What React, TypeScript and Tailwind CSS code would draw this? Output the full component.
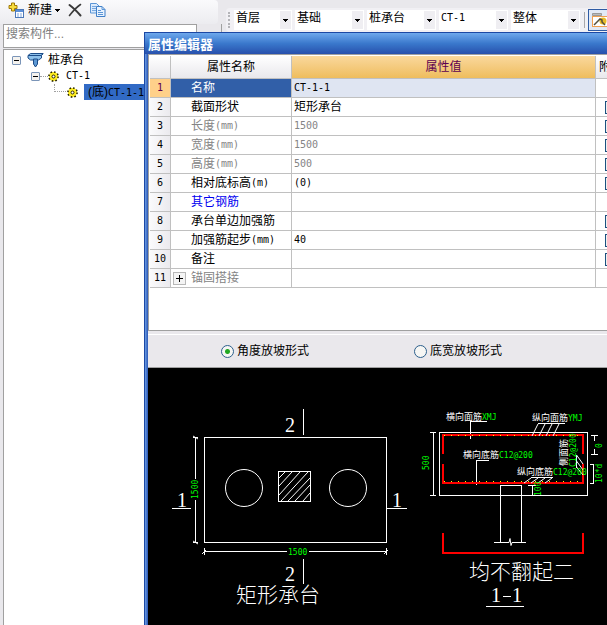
import { useState } from "react";
import clsx from "clsx";

type Row = {
  name: string;
  unit?: string;
  value?: string;
  tone?: "muted" | "link";
  extra?: boolean;
  expand?: boolean;
};

const rows: Row[] = [
  { name: "名称", value: "CT-1-1" },
  { name: "截面形状", value: "矩形承台", extra: true },
  { name: "长度", unit: "(mm)", value: "1500", tone: "muted", extra: true },
  { name: "宽度", unit: "(mm)", value: "1500", tone: "muted", extra: true },
  { name: "高度", unit: "(mm)", value: "500", tone: "muted", extra: true },
  { name: "相对底标高", unit: "(m)", value: "(0)", extra: true },
  { name: "其它钢筋", tone: "link" },
  { name: "承台单边加强筋", extra: true },
  { name: "加强筋起步", unit: "(mm)", value: "40", extra: true },
  { name: "备注", extra: true },
  { name: "锚固搭接", tone: "muted", expand: true },
];

const combos = [
  { label: "楼层", value: "首层", width: "w-[58px]" },
  { label: "类别", value: "基础", width: "w-[69px]" },
  { label: "构件类型", value: "桩承台", width: "w-[69px]" },
  { label: "构件", value: "CT-1", width: "w-[69px]" },
  { label: "范围", value: "整体", width: "w-[69px]" },
];

const mono = "font-['DejaVu_Sans_Mono','Noto_Sans_CJK_SC',monospace] text-[10px]";

function Arrow() {
  return (
    <svg width="5" height="3" viewBox="0 0 5 3" shapeRendering="crispEdges">
      <path d="M0 0h5v1h-1v1h-1v1h-1v-1h-1v-1h-1z" />
    </svg>
  );
}

function NewIcon() {
  return (
    <svg width="17" height="16" viewBox="0 0 17 16">
      <path d="M3.500 1h3v2.500h2.500v3h-2.500v2.500h-3v-2.500H1v-3h2.500z" fill="#f8dc3c" stroke="#a07808" />
      <rect x="7.500" y="7.500" width="8" height="8" fill="#fff" stroke="#4c78b8" />
      <path d="M8 8h7v2H8z" fill="#5a8ed8" />
      <path d="M9 12h2M12 12h2M9 14h2M12 14h2" stroke="#7fa6de" />
    </svg>
  );
}

function DeleteIcon() {
  return (
    <svg width="14" height="14" viewBox="0 0 14 14" fill="none" stroke="#3a3a3a" strokeLinecap="round">
      <path d="M1.500 2C5 4.500 9 8.500 12.500 12.500" strokeWidth="2" />
      <path d="M12.500 1.500C8 4.500 5 8 1.500 12.500" strokeWidth="1.600" />
    </svg>
  );
}

function CopyIcon() {
  return (
    <svg width="16" height="14" viewBox="0 0 16 14">
      <path d="M.5.5h6l3 3v6.500h-9z" fill="#dcebfc" stroke="#5b95d6" />
      <path d="M2 3.500h4M2 5.500h4M2 7.500h4" stroke="#78a8e0" />
      <path d="M6.500 3.500h5.500l3 3v7h-8.500z" fill="#e8f2fe" stroke="#3f7fc8" />
      <path d="M12 3.500v3h3M8 7.500h3M8 9.500h5M8 11.500h5" fill="none" stroke="#5b95d6" />
    </svg>
  );
}

function PileIcon() {
  return (
    <svg width="17" height="16" viewBox="0 0 17 16">
      <path d="M1 3.500l2.500-2h12.500l-1.500 2v2.500l-3 2h-8L1 6z" fill="#8cc0ea" stroke="#1c4c88" />
      <path d="M1 3.500h13M14.500 3.500l1.500-2" stroke="#1c4c88" fill="none" />
      <path d="M6.500 7h4v5l-2 3-2-3z" fill="#5c98d4" stroke="#1c4c88" />
    </svg>
  );
}

function GearIcon() {
  return (
    <svg width="11" height="11" viewBox="0 0 11 11">
      <circle cx="5.500" cy="5.500" r="4.500" fill="#ffee20" stroke="#2a2600" strokeWidth="1.800" strokeDasharray="1.600 1.930" />
      <circle cx="5.500" cy="5.500" r="3.800" fill="#ffee20" />
      <circle cx="5.500" cy="5.500" r="1.500" fill="#fff" stroke="#2a2600" />
    </svg>
  );
}

function EditIcon() {
  return (
    <svg width="16" height="14" viewBox="0 0 16 14">
      <path d="M.5.5h9v2h-9z" fill="#bbb" stroke="#999" />
      <rect x=".5" y="3.500" width="15" height="10" fill="#fff" stroke="#f0a050" />
      <circle cx="11" cy="8" r="3.500" fill="#e8bc28" />
      <path d="M2 12l4-4 2-2 2 1v2l3 3" fill="none" stroke="#54503c" strokeWidth="1.500" />
    </svg>
  );
}

function Toggle() {
  return (
    <button
      aria-label="折叠"
      className="flex size-[9px] shrink-0 items-center justify-center rounded-[1px] border border-[#7b95b8] bg-[#f4f2ee]"
    >
      <span className="h-px w-[5px] bg-black" />
    </button>
  );
}

function Toolbar() {
  return (
    <div className="flex items-start">
      <div className="flex h-6 w-[218px] shrink-0 items-start rounded-r bg-gradient-to-b from-[#fafafc] to-[#ececf0] pl-2 pt-0.5">
        <button className="flex items-center gap-[3px] text-xs leading-4">
          <NewIcon />
          新建
          <Arrow />
        </button>
        <button aria-label="删除" className="ml-2 mt-px"><DeleteIcon /></button>
        <button aria-label="复制" className="ml-2 mt-px"><CopyIcon /></button>
      </div>
      <div className="ml-2 mt-2 flex h-6 grow items-center gap-[3px] overflow-hidden rounded-l bg-[#f1f0f4] pl-0.5">
        <div className="mr-px h-4 border-l-2 border-dotted border-[#b4b4b8]" />
        {combos.map((c) => (
          <div key={c.label} className={clsx("relative h-5 shrink-0 bg-white", c.width)}>
            <select
              aria-label={c.label}
              defaultValue={c.value}
              className={clsx(
                "block h-4 w-full appearance-none bg-transparent pl-0.5 leading-4 outline-none",
                c.value === "CT-1" ? mono : "text-xs",
              )}
            >
              <option>{c.value}</option>
            </select>
            <span className="pointer-events-none absolute inset-y-px right-px flex w-[11px] items-center justify-center bg-[#efeef2]">
              <Arrow />
            </span>
          </div>
        ))}
        <div className="ml-px h-4 w-px shrink-0 bg-[#a8a8ac]" />
        <button aria-label="编辑" className="flex h-[22px] w-7 shrink-0 items-center border border-[#2f5ba4] bg-[#e2e9f5] pl-[3px]">
          <EditIcon />
        </button>
      </div>
    </div>
  );
}

function Tree() {
  return (
    <ul className="pt-0.5 text-xs leading-4">
      <li className="flex h-4 items-center pl-2">
        <Toggle />
        <span className="ml-1.5"><PileIcon /></span>
        <span className="ml-1">桩承台</span>
      </li>
      <li className="flex h-4 items-center pl-[27px]">
        <Toggle />
        <span className="w-2 border-t border-dotted border-[#a0a0a0]" />
        <GearIcon />
        <span className={clsx("ml-[7px]", mono)}>CT-1</span>
      </li>
      <li className="flex h-4 items-center pl-[50px]">
        <span className="mb-2 h-2 w-3 border-b border-l border-dotted border-[#a0a0a0]" />
        <span className="ml-px"><GearIcon /></span>
        <span className="ml-1.5 h-4 whitespace-nowrap bg-[#316ac5] px-1">
          (底)<span className={mono}>CT-1-1</span>
        </span>
      </li>
    </ul>
  );
}

function PropertyTable() {
  return (
    <table className="w-full table-fixed border-separate border-spacing-0 text-xs leading-4">
      <colgroup>
        <col className="w-[21px]" />
        <col className="w-[121px]" />
        <col />
        <col className="w-[75px]" />
      </colgroup>
      <thead>
        <tr className="h-[23px] *:border-b *:border-r *:border-[#c0c0c0] *:p-0 *:font-normal">
          <th className="bg-gradient-to-b from-white to-[#e9e8ec]" />
          <th className="bg-gradient-to-b from-white to-[#e9e8ec]">属性名称</th>
          <th className="bg-gradient-to-b from-[#fad89c] to-[#efbd5c] text-[#5c0050]">属性值</th>
          <th className="bg-gradient-to-b from-white to-[#e9e8ec] text-left"><span className="pl-[3px]">附加</span></th>
        </tr>
      </thead>
      <tbody>
        {rows.map((r, i) => (
          <tr
            key={r.name}
            className={clsx(
              "h-[19px] *:border-b *:border-r *:border-[#c0c0c0] *:p-0",
              r.tone === "muted" && "text-[#848484]",
            )}
          >
            <td
              className={clsx(
                "text-center",
                mono,
                i === 0 ? "bg-[#ffd08a] text-[#5c0050]" : "bg-gradient-to-r from-[#fafafc] to-[#ebeaee] text-black",
              )}
            >
              {i + 1}
            </td>
            <td className={clsx(i === 0 && "bg-[#315fa8] text-white", r.tone === "link" && "text-[#0000f0]")}>
              <div className={clsx("flex h-[18px] items-center whitespace-nowrap", r.expand ? "gap-[5px] pl-0.5" : "pl-5")}>
                {r.expand && (
                  <button aria-label="展开" className="flex size-[13px] items-center justify-center border border-[#b8b8b8] bg-[#f4f4f4]">
                    <svg width="7" height="7" viewBox="0 0 7 7" shapeRendering="crispEdges">
                      <path d="M0 3h7v1H0zM3 0h1v7H3z" />
                    </svg>
                  </button>
                )}
                {r.name}
                {r.unit && <span className={mono}>{r.unit}</span>}
              </div>
            </td>
            <td className={clsx(i === 0 && "bg-[#dfe5f2]")}>
              <div className={clsx("pl-0.5", r.value !== "矩形承台" && mono)}>{r.value}</div>
            </td>
            <td>
              {r.extra && (
                <input
                  type="checkbox"
                  aria-label={`附加 ${r.name}`}
                  className="ml-[9px] block size-[13px] appearance-none border border-[#1c5180] bg-[#f0f0ee]"
                />
              )}
            </td>
          </tr>
        ))}
      </tbody>
    </table>
  );
}

function SlopeOptions() {
  const [slope, setSlope] = useState("角度放坡形式");
  return (
    <div className="flex h-[34px] shrink-0 items-center gap-[105px] border-b border-t border-b-[#a0a0a0] border-t-white bg-[#eae8ec] pl-[73px] text-xs leading-4">
      {["角度放坡形式", "底宽放坡形式"].map((s) => (
        <label key={s} className="flex items-center gap-[3px] whitespace-nowrap">
          <input
            type="radio"
            name="slope"
            checked={slope === s}
            onChange={() => setSlope(s)}
            className="size-[13px] appearance-none rounded-full border border-[#2c5f8c] bg-[#f6f6f4] checked:bg-[radial-gradient(circle,#22a822_0_2px,#f6f6f4_3px)]"
          />
          {s}
        </label>
      ))}
    </div>
  );
}

const dotsX = Array.from({ length: 10 }, (_, i) => 451 + i * 14);

function Drawing() {
  return (
    <svg width="459" height="257" viewBox="148 368 459 257" fill="none" stroke="#fff" className="block shrink-0">
      {/* plan */}
      <g shapeRendering="crispEdges">
        <rect x="204.500" y="437.500" width="182" height="105" />
        <rect x="278.500" y="471.500" width="32" height="30" />
        <path d="M303.500 409v26M303.500 559v25M172 508.500h19M387 508.500h20" />
        <path d="M195.500 437v42M195.500 500v43M193 437.500h5M193 542.500h5" />
        <path d="M204 551.500h83M309 551.500h78M204.500 548v7M386.500 548v7" />
      </g>
      <path d="M193 436l5 3M193 541l5 3M202 554l4-4M384 554l4-4" />
      <circle cx="244" cy="488" r="18.500" />
      <circle cx="348" cy="488" r="18.500" />
      <path d="M279 478l6-6M279 486l13-14M279 495l21-23M281 501l27-29M288 501l22-23M295 501l15-16M303 501l7-8" />

      {/* section 1-1 */}
      <g shapeRendering="crispEdges">
        <rect x="439.500" y="432.500" width="148" height="63" />
        <path d="M433.500 432v64M430 432.500h6M430 495.500h6" />
        <path d="M500.500 542v-56.500h21v56.500M494 542.500h15M512 542.500h14" />
        <path d="M470.500 439v-17.500h16M476.500 485v-24.500h12" />
        <path d="M538 423.500h27M531 477.500h22" />
        <path d="M528 485.500h8M532.500 485v10" />
        <path d="M591 435.500h7M594.500 435v6M594.500 449v6M591 454.500h7" />
        <path d="M590 464.500h3v19h-3" />
        <path d="M486 606.500h38" />
      </g>
      <g stroke="#f00" strokeWidth="2" shapeRendering="crispEdges">
        <path d="M443 454v-19h140v19M443 464v19h140v-19" />
        <path d="M443 533v20h140v-20" />
      </g>
      <g fill="#ff0" stroke="none" shapeRendering="crispEdges">
        {dotsX.map((x) => (
          <g key={x}>
            <rect x={x - 7} y="435" width="1" height="1" />
            <rect x={x - 7} y="481" width="1" height="1" />
            <rect x={x} y="435" width="1" height="1" />
            <rect x={x} y="481" width="1" height="1" />
          </g>
        ))}
      </g>
      <path d="M538 424l-6 12M545 424l-6 12M552 424l-6 12M559 424l-6 12" />
      <path d="M531 478l-7 5M538 478l-7 5M545 478l-7 5M552 478l-7 5" />
      <path d="M576.500 455v13M576.500 455l6.500 9M576.500 461l6.500 9M576.500 467l6.500 8" />
      <path d="M509 542.500l1-4 1 7 1-3" />

      <g fill="#fff" stroke="none" fontFamily="'Liberation Serif', 'Noto Sans CJK SC', serif" fontSize="20">
        <text x="285" y="432">2</text>
        <text x="285" y="581">2</text>
        <text x="177" y="507">1</text>
        <text x="392" y="507">1</text>
        <text x="491" y="602">1</text>
        <path d="M503 596.500h8" stroke="#fff" />
        <text x="512" y="602">1</text>
        <text x="236" y="602" fontSize="21" fontWeight="300">矩形承台</text>
        <text x="469" y="579" fontSize="21" fontWeight="300">均不翻起二</text>
      </g>
      <g fill="#fff" stroke="none" fontFamily="'Noto Sans CJK SC', sans-serif" fontSize="9">
        <text x="446" y="420">横向面筋</text>
        <text x="532" y="421">纵向面筋</text>
        <text x="463" y="458">横向底筋</text>
        <text x="517" y="475">纵向底筋</text>
        <text x="567" y="466" transform="rotate(-90 567 466)">侧面筋</text>
      </g>
      <g fill="#0f0" stroke="none" fontFamily="'DejaVu Sans Mono', monospace" fontSize="8">
        <text x="482" y="420">XMJ</text>
        <text x="568" y="421">YMJ</text>
        <text x="499" y="458">C12@200</text>
        <text x="553" y="475">C12@200</text>
        <text x="576" y="467" transform="rotate(-90 576 467)">C12@200</text>
        <text x="288" y="555">1500</text>
        <text x="198" y="499" transform="rotate(-90 198 499)">1500</text>
        <text x="429" y="470" transform="rotate(-90 429 470)">500</text>
        <text x="541" y="496" transform="rotate(-90 541 496)">100</text>
        <text x="602" y="448" transform="rotate(-90 602 448)">0</text>
        <text x="602" y="483" transform="rotate(-90 602 483)">10*d</text>
      </g>
    </svg>
  );
}

function PropertyEditor() {
  return (
    <section className="absolute -right-16 bottom-0 left-36 top-8 flex flex-col border-l border-t border-[#1c48a4] bg-[#3a72d0]">
      <h2 className="h-[21px] shrink-0 bg-gradient-to-b from-[#6ea8ec] via-[#3a78cc] to-[#2850ac] pl-[3px] text-[13px] font-bold leading-6 text-white">
        属性编辑器
      </h2>
      <div className="flex grow flex-col bg-gradient-to-r from-[#6a9ce4] to-[#2c56b4] bg-[length:3px_100%] bg-no-repeat pl-[3px]">
        <div className="h-[277px] shrink-0 border-b border-l border-t border-[#a0a0a0] bg-white pl-px pt-px">
          <PropertyTable />
        </div>
        <div className="h-[3px] shrink-0 bg-[#eae8ec]" />
        <SlopeOptions />
        <div className="grow bg-black">
          <Drawing />
        </div>
      </div>
    </section>
  );
}

export default function App() {
  return (
    <main className="relative flex h-screen flex-col overflow-hidden bg-[#e9e8ec] font-['Liberation_Sans','Noto_Sans_CJK_SC',sans-serif] text-black">
      <div className="h-6 shrink-0">
        <Toolbar />
      </div>
      <div className="flex w-[222px] grow flex-col border-r border-[#a0a0a0] pl-[3px]">
        <input
          aria-label="搜索构件"
          placeholder="搜索构件..."
          className="mb-px mr-6 h-6 border border-[#a0a0a0] bg-white px-0.5 pb-1 text-xs leading-4 outline-none placeholder:text-[#808080]"
        />
        <div className="grow border-l border-t border-[#a0a0a0] bg-white">
          <Tree />
        </div>
      </div>
      <PropertyEditor />
    </main>
  );
}
